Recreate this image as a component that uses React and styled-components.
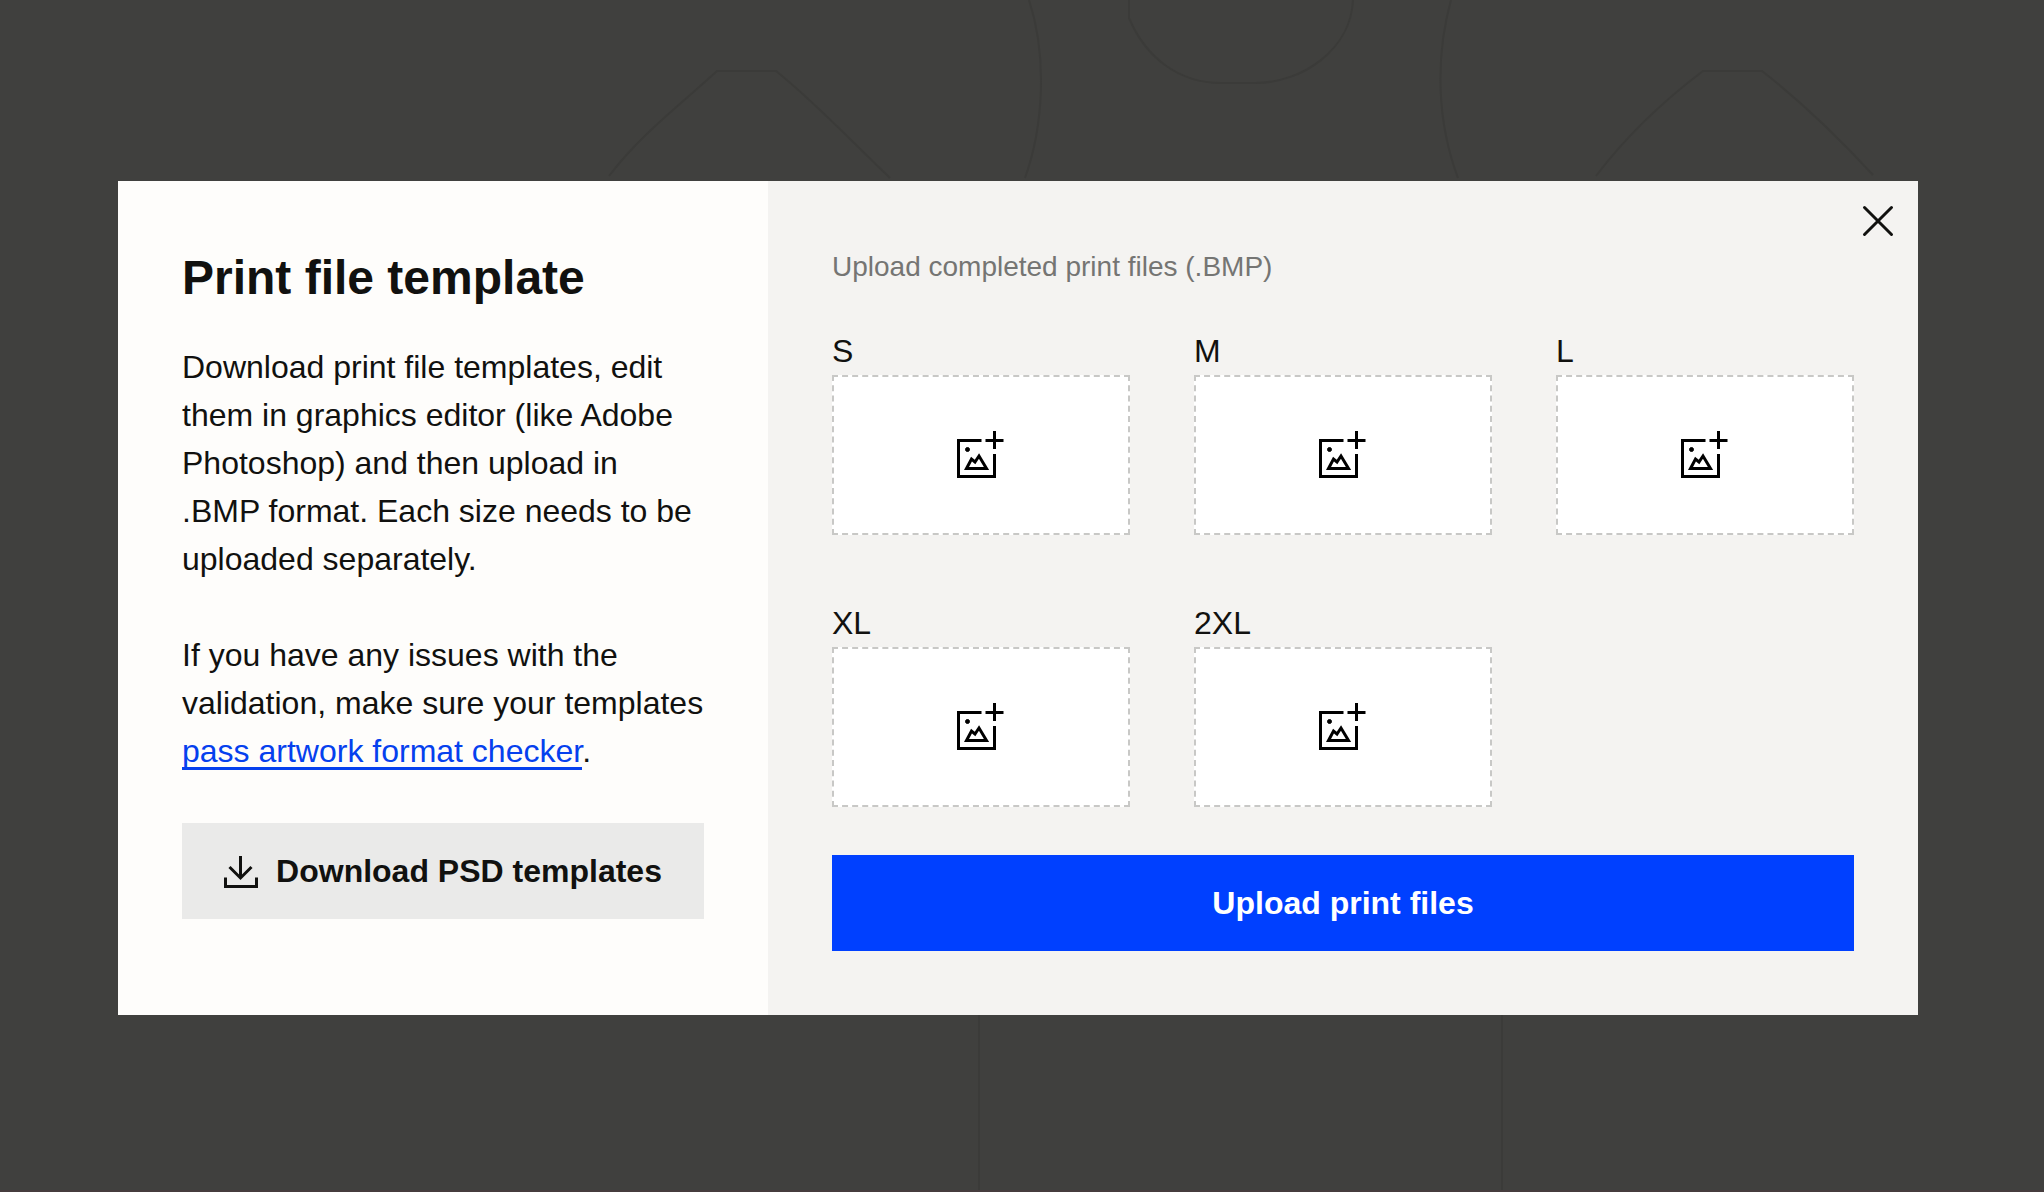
import React, { useState } from 'react';
import styled, { createGlobalStyle } from 'styled-components';

const colors = {
  ink: '#11110f',
  black: '#000000',
  muted: '#757573',
  blue: '#0040ff',
  link: '#0540ee',
  backdrop: '#40403e',
  outline: '#3b3b39',
  panel: '#fefdfb',
  side: '#f4f3f1',
  button: '#eaeae9',
  border: '#c8c8c6',
  white: '#ffffff',
};

const GlobalStyle = createGlobalStyle`
  * {
    box-sizing: border-box;
  }

  body {
    margin: 0;
    background: ${colors.backdrop};
    color: ${colors.ink};
    font-family: 'Liberation Sans', Helvetica, Arial, sans-serif;
    font-size: 32px;
    line-height: 48px;
  }
`;

const Backdrop = styled.div`
  position: relative;
  display: flex;
  align-items: center;
  justify-content: center;
  min-height: 100vh;
  padding: 6px 8px 0 0;
  overflow: hidden;
  border-bottom: 2px solid #463c3d;
`;

const Artwork = styled.svg`
  position: absolute;
  inset: 0;
  width: 100%;
  height: 100%;
  fill: none;
  stroke: ${colors.outline};
  stroke-width: 2;
`;

const Dialog = styled.section`
  position: relative;
  display: grid;
  grid-template-columns: 650px 1fr;
  width: 100%;
  max-width: 1800px;
  background: ${colors.side};

  @media (max-width: 1400px) {
    grid-template-columns: 1fr;
  }
`;

const InfoPanel = styled.div`
  padding: 64px;
  background: ${colors.panel};
`;

const Title = styled.h1`
  margin: 0 0 32px;
  font-size: 48px;
  line-height: 66px;
  font-weight: 700;
`;

const Text = styled.p`
  margin: 0 0 48px;
`;

const TextLink = styled.a`
  color: ${colors.link};
  text-decoration: none;
  box-shadow: 0 -2px 0 ${colors.link} inset, 0 1px 0 ${colors.link};
`;

const Button = styled.button`
  display: flex;
  align-items: center;
  justify-content: center;
  gap: 14px;
  width: 100%;
  height: 96px;
  padding: 0;
  border: 0;
  background: ${({ $primary }) => ($primary ? colors.blue : colors.button)};
  color: ${({ $primary }) => ($primary ? colors.white : colors.ink)};
  font: inherit;
  font-weight: 700;
  cursor: pointer;
`;

const UploadPanel = styled.form`
  padding: 64px;
`;

const Caption = styled.p`
  margin: 0 0 38px;
  color: ${colors.muted};
  font-size: 28px;
  line-height: 44px;
`;

const Sizes = styled.div`
  display: grid;
  grid-template-columns: repeat(3, 1fr);
  gap: 64px;
  margin-bottom: 48px;
`;

const Size = styled.label`
  display: flex;
  flex-direction: column;
  cursor: pointer;
`;

const DropZone = styled.span`
  display: flex;
  align-items: center;
  justify-content: center;
  height: 160px;
  border: 2px dashed ${colors.border};
  background: ${colors.white};
`;

const FileInput = styled.input`
  position: absolute;
  width: 1px;
  height: 1px;
  opacity: 0;
`;

const CloseButton = styled.button`
  position: absolute;
  top: 16px;
  right: 16px;
  display: flex;
  padding: 0;
  border: 0;
  background: none;
  color: ${colors.ink};
  cursor: pointer;
`;

const sizes = ['S', 'M', 'L', 'XL', '2XL'];

function DownloadIcon() {
  return (
    <svg width="38" height="38" viewBox="0 0 38 38" fill="none" stroke="currentColor" strokeWidth="3" aria-hidden="true">
      <path d="M16.500 4v22M5.500 15l11 11 11-11" />
      <path d="M1.500 25.500v9h31v-9" />
    </svg>
  );
}

function AddImageIcon() {
  return (
    <svg width="48" height="48" viewBox="0 0 48 48" fill="none" stroke={colors.black} strokeWidth="3" aria-hidden="true">
      <path d="M24.500 9.500h-23v36h36V23" />
      <path d="M37.500 0v18M28.500 9.500h18" />
      <path d="M9.500 37.500l5-9.500 3.500 3 4-6 7.500 12.500z" />
      <circle cx="10.500" cy="18.500" r="2" fill={colors.black} strokeWidth="1" />
    </svg>
  );
}

function CloseIcon() {
  return (
    <svg width="48" height="48" viewBox="0 0 48 48" fill="none" stroke="currentColor" strokeWidth="3" strokeLinecap="round" aria-hidden="true">
      <path d="M10.500 10.500l27 27M37.500 10.500l-27 27" />
    </svg>
  );
}

function ShirtOutline() {
  return (
    <Artwork viewBox="0 0 2044 1192" preserveAspectRatio="xMidYMin slice" aria-hidden="true">
      <path d="M609 176C640 135 680 105 717 71h59c40 32 75 70 114 107" />
      <path d="M1029 0C1047 55 1044 125 1025 178" />
      <path d="M1129 0v18c17 40 50 65 92 65h34c48 0 96-34 98-83" />
      <path d="M1451 0c-16 58-14 122 7 178" />
      <path d="M1596 176c31-41 66-74 107-105h59c41 32 76 66 111 104" />
      <path d="M979 1015v177M1502 1015v177" />
    </Artwork>
  );
}

function SizeUpload({ size }) {
  return (
    <Size>
      <span>{size}</span>
      <FileInput type="file" accept=".bmp" />
      <DropZone>
        <AddImageIcon />
      </DropZone>
    </Size>
  );
}

function App() {
  const [open, setOpen] = useState(true);

  return (
    <>
      <GlobalStyle />
      <Backdrop>
        <ShirtOutline />
        {open && (
          <Dialog role="dialog" aria-labelledby="dialog-title">
            <InfoPanel>
              <Title id="dialog-title">Print file template</Title>
              <Text>
                Download print file templates, edit them in graphics editor (like Adobe
                Photoshop) and then upload in .BMP format. Each size needs to be uploaded
                separately.
              </Text>
              <Text>
                If you have any issues with the validation, make sure your templates{' '}
                <TextLink href="#checker">pass artwork format checker</TextLink>.
              </Text>
              <Button type="button">
                <DownloadIcon />
                Download PSD templates
              </Button>
            </InfoPanel>

            <UploadPanel onSubmit={(e) => e.preventDefault()}>
              <Caption>Upload completed print files (.BMP)</Caption>
              <Sizes>
                {sizes.map((size) => (
                  <SizeUpload key={size} size={size} />
                ))}
              </Sizes>
              <Button $primary type="submit">Upload print files</Button>
            </UploadPanel>

            <CloseButton type="button" aria-label="Close" onClick={() => setOpen(false)}>
              <CloseIcon />
            </CloseButton>
          </Dialog>
        )}
      </Backdrop>
    </>
  );
}

export default App;
